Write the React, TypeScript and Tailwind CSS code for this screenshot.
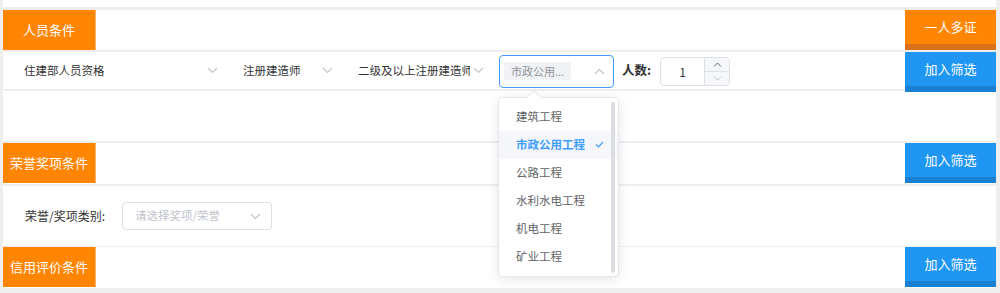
import React from 'react';

const FONT = { fontFamily: '"Noto Sans CJK SC", "Noto Sans", sans-serif' };

// ─── small pieces ─────────────────────────────────────────────────────────────

function Chevron({ up = false, color = '#c0c4cc' }: { up?: boolean; color?: string }) {
    return (
        <svg width="11" height="7" viewBox="0 0 11 7" className="shrink-0">
            <polyline
                points={up ? '1,6 5.5,1.5 10,6' : '1,1 5.5,5.5 10,1'}
                fill="none"
                stroke={color}
                strokeWidth="1.1"
            />
        </svg>
    );
}

function SectionLabel({ text }: { text: string }) {
    return (
        <div className="w-[92px] h-[40px] bg-[#ff8503] text-white text-[13px] flex items-center justify-center shadow-[1px_0_0_#ffb469]">
            {text}
        </div>
    );
}

function ActionButton({ text, tone }: { text: string; tone: 'orange' | 'blue' }) {
    const cls =
        tone === 'orange'
            ? 'bg-[#ff8503] border-[#d9721b]'
            : 'bg-[#1f97f2] border-[#1a80d3]';
    return (
        <button
            className={`w-[91px] h-[40px] border-b-[6px] text-white text-[13px] flex items-center justify-center shrink-0 relative z-10 ${cls}`}
        >
            {text}
        </button>
    );
}

function Header({ label, action, tone }: { label: string; action: string; tone: 'orange' | 'blue' }) {
    return (
        <div className="h-[41px] bg-white flex items-start justify-between">
            <SectionLabel text={label} />
            <ActionButton text={action} tone={tone} />
        </div>
    );
}

function PlainSelect({ text, width, textWidth }: { text: string; width: string; textWidth: string }) {
    return (
        <div className={`${width} flex items-center justify-between`}>
            <span className={`${textWidth} overflow-hidden whitespace-nowrap text-[11.5px] text-[#333]`}>{text}</span>
            <Chevron />
        </div>
    );
}

const OPTIONS = ['建筑工程', '市政公用工程', '公路工程', '水利水电工程', '机电工程', '矿业工程'];

// ─── Main Component ───────────────────────────────────────────────────────────

export default function App() {
    return (
        <div style={FONT} className="min-h-[293px] bg-[#eeeeee] pl-[3px] pr-[4px] flex flex-col">
            <div className="h-[7px] bg-white" />

            {/* ── 人员条件 ── */}
            <div className="mt-[3px] h-[40px] bg-white flex items-start justify-between">
                <SectionLabel text="人员条件" />
                <ActionButton text="一人多证" tone="orange" />
            </div>

            <div className="mt-[2px] h-[37px] bg-white flex items-start">
                <div className="h-full flex items-center pl-[21px]">
                    <PlainSelect text="住建部人员资格" width="w-[194px]" textWidth="w-[120px]" />
                    <div className="ml-[25px]">
                        <PlainSelect text="注册建造师" width="w-[90px]" textWidth="w-[70px]" />
                    </div>
                    <div className="ml-[25px]">
                        <PlainSelect text="二级及以上注册建造师" width="w-[126px]" textWidth="w-[112px]" />
                    </div>

                    {/* focused multi select */}
                    <div className="relative ml-[15px]">
                        <div className="w-[115px] h-[33px] mt-[1px] border border-[#409eff] rounded-[4px] flex items-center justify-between pl-[4px] pr-[8px]">
                            <span className="h-[18px] px-[7px] bg-[#f0f2f5] rounded-[3px] text-[11px] text-[#909399] flex items-center whitespace-nowrap">
                                市政公用...
                            </span>
                            <Chevron up />
                        </div>

                        <div className="absolute left-[-1px] top-[43px] w-[121px] bg-white border border-[#e4e7ed] rounded-[4px] shadow-[0_2px_12px_rgba(0,0,0,0.1)] pt-[5px] pb-[5px] z-20">
                            <div className="absolute -top-[6px] left-[30px] w-[10px] h-[10px] bg-white border-l border-t border-[#e4e7ed] rotate-45" />
                            <div className="absolute right-[3px] top-[4px] bottom-[3px] w-[4px] rounded-full bg-[#dcdde0]" />
                            {OPTIONS.map((o) => {
                                const active = o === '市政公用工程';
                                return (
                                    <div
                                        key={o}
                                        className={`h-[28px] pl-[17px] pr-[8px] flex items-center whitespace-nowrap text-[11.5px] ${
                                            active ? 'bg-[#f5f7fa] text-[#409eff] font-bold' : 'text-[#606266]'
                                        }`}
                                    >
                                        <span>{o}</span>
                                        {active && (
                                            <svg width="9" height="7" viewBox="0 0 9 7" className="ml-[10px]">
                                                <polyline points="1,3.5 3.5,6 8,1" fill="none" stroke="#409eff" strokeWidth="1.2" />
                                            </svg>
                                        )}
                                    </div>
                                );
                            })}
                        </div>
                    </div>

                    <span className="ml-[8px] text-[12.5px] font-bold text-[#303133]">人数:</span>

                    <div className="ml-[9px] mt-[2px] w-[70px] h-[29px] border border-[#dcdfe6] rounded-[4px] flex overflow-hidden">
                        <div className="flex-1 flex items-center justify-center text-[12px] text-[#333]">1</div>
                        <div className="w-[25px] border-l border-[#dcdfe6] bg-[#f5f7fa] flex flex-col">
                            <div className="flex-1 flex items-center justify-center border-b border-[#dcdfe6]">
                                <svg width="9" height="5" viewBox="0 0 9 5">
                                    <polyline points="1,4.5 4.5,1 8,4.5" fill="none" stroke="#606266" strokeWidth="1" />
                                </svg>
                            </div>
                            <div className="flex-1 flex items-center justify-center">
                                <svg width="9" height="5" viewBox="0 0 9 5">
                                    <polyline points="1,0.5 4.5,4 8,0.5" fill="none" stroke="#c0c4cc" strokeWidth="1" />
                                </svg>
                            </div>
                        </div>
                    </div>
                </div>
                <div className="ml-auto">
                    <ActionButton text="加入筛选" tone="blue" />
                </div>
            </div>

            <div className="mt-[2px] h-[50px] bg-white" />

            {/* ── 荣誉奖项条件 ── */}
            <div className="mt-[2px]">
                <Header label="荣誉奖项条件" action="加入筛选" tone="blue" />
            </div>

            <div className="mt-[2px] h-[60px] bg-white flex items-center pl-[22px]">
                <span className="text-[12px] text-[#333]">荣誉/奖项类别:</span>
                <div className="ml-[17px] w-[150px] h-[28px] border border-[#dcdfe6] rounded-[4px] flex items-center justify-between pl-[12px] pr-[10px]">
                    <span className="text-[11.5px] text-[#c0c4cc]">请选择奖项/荣誉</span>
                    <Chevron />
                </div>
            </div>

            {/* ── 信用评价条件 ── */}
            <div className="mt-[1px]">
                <Header label="信用评价条件" action="加入筛选" tone="blue" />
            </div>
        </div>
    );
}
